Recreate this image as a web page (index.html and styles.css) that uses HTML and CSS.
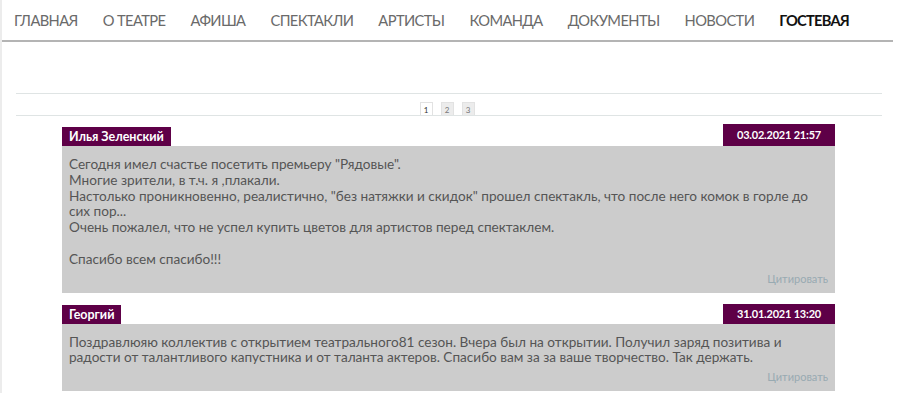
FILE: index.html
```html
<!DOCTYPE html>
<html lang="ru">
<head>
<meta charset="utf-8">
<link rel="stylesheet" href="styles.css">
</head>
<body>
<nav class="nav">
  <a class="nav-item">ГЛАВНАЯ</a>
  <a class="nav-item">О ТЕАТРЕ</a>
  <a class="nav-item">АФИША</a>
  <a class="nav-item">СПЕКТАКЛИ</a>
  <a class="nav-item">АРТИСТЫ</a>
  <a class="nav-item">КОМАНДА</a>
  <a class="nav-item">ДОКУМЕНТЫ</a>
  <a class="nav-item">НОВОСТИ</a>
  <a class="nav-item active">ГОСТЕВАЯ</a>
</nav>
<main class="main">
  <div class="top-rule"></div>
  <div class="pager">
    <span class="page current">1</span>
    <span class="page">2</span>
    <span class="page">3</span>
  </div>
  <section class="comments">
    <article class="comment">
      <header class="comment-head">
        <span class="name">Илья Зеленский</span>
        <span class="date">03.02.2021 21:57</span>
      </header>
      <div class="comment-body">
        <p class="text">Сегодня имел счастье посетить премьеру "Рядовые".<br>Многие зрители, в т.ч. я ,плакали.<br>Настолько проникновенно, реалистично, "без натяжки и скидок" прошел спектакль, что после него комок в горле до сих пор...<br>Очень пожалел, что не успел купить цветов для артистов перед спектаклем.<br><br>Спасибо всем спасибо!!!</p>
        <div class="quote">Цитировать</div>
      </div>
    </article>
    <article class="comment">
      <header class="comment-head">
        <span class="name">Георгий</span>
        <span class="date">31.01.2021 13:20</span>
      </header>
      <div class="comment-body">
        <p class="text">Поздравлюяю коллектив с открытием театрального81 сезон. Вчера был на открытии. Получил заряд позитива и радости от талантливого капустника и от таланта актеров. Спасибо вам за за ваше творчество. Так держать.</p>
        <div class="quote">Цитировать</div>
      </div>
    </article>
  </section>
</main>
</body>
</html>
```

FILE: styles.css
```css
html, body {
  margin: 0;
  padding: 0;
  background: #fff;
}
body {
  font-family: Lato, "Noto Sans", sans-serif;
  width: 900px;
  height: 393px;
  overflow: hidden;
  border-left: 2px solid #ececec;
  box-sizing: border-box;
}
.nav {
  display: flex;
  align-items: center;
  gap: 25px;
  height: 40px;
  padding-left: 12px;
  margin-right: 7px;
  border-bottom: 2px solid #b4b4b4;
  box-sizing: content-box;
}
.nav-item {
  font-size: 14.7px;
  color: #6a6a6a;
  letter-spacing: -0.6px;
  text-decoration: none;
  white-space: nowrap;
}
.nav-item.active {
  color: #111;
  font-weight: 700;
  letter-spacing: -0.8px;
}
.main {
  padding: 51px 18px 0 14px;
}
.top-rule {
  height: 1px;
  background: #dfe4e4;
}
.pager {
  display: flex;
  justify-content: center;
  gap: 8px;
  padding-top: 8px;
  border-bottom: 1px solid #dfe4e4;
  padding-right: 4px;
}
.page {
  width: 13px;
  height: 13px;
  box-sizing: border-box;
  border: 1px solid #e2e2e2;
  border-bottom: none;
  background: #ececec;
  font-size: 8px;
  color: #777;
  display: flex;
  align-items: flex-end;
  justify-content: center;
  line-height: 10px;
}
.page.current {
  background: #fff;
  color: #333;
}
.comments {
  padding: 8px 47px 0 46px;
  display: flex;
  flex-direction: column;
  gap: 11px;
}
.comment-head {
  display: flex;
  justify-content: space-between;
  align-items: flex-end;
}
.name {
  background: #5e0047;
  color: #fff;
  font-weight: 700;
  font-size: 12.5px;
  height: 19px;
  line-height: 19px;
  padding: 0 7px;
}
.date {
  background: #5e0047;
  color: #fff;
  font-weight: 700;
  font-size: 11px;
  height: 22px;
  line-height: 22px;
  width: 112px;
  text-align: center;
  box-sizing: border-box;
  letter-spacing: -0.2px;
}
.comment:nth-child(2) .date {
  height: 20px;
  line-height: 20px;
}
.comment-body {
  background: #cccccc;
  padding: 11px 7px 7px 7px;
}
.text {
  margin: 0;
  font-size: 13.6px;
  line-height: 15.8px;
  color: #555;
}
.quote {
  text-align: right;
  font-size: 11px;
  color: #98aab2;
  margin-top: 4px;
  line-height: 14px;
}
```
